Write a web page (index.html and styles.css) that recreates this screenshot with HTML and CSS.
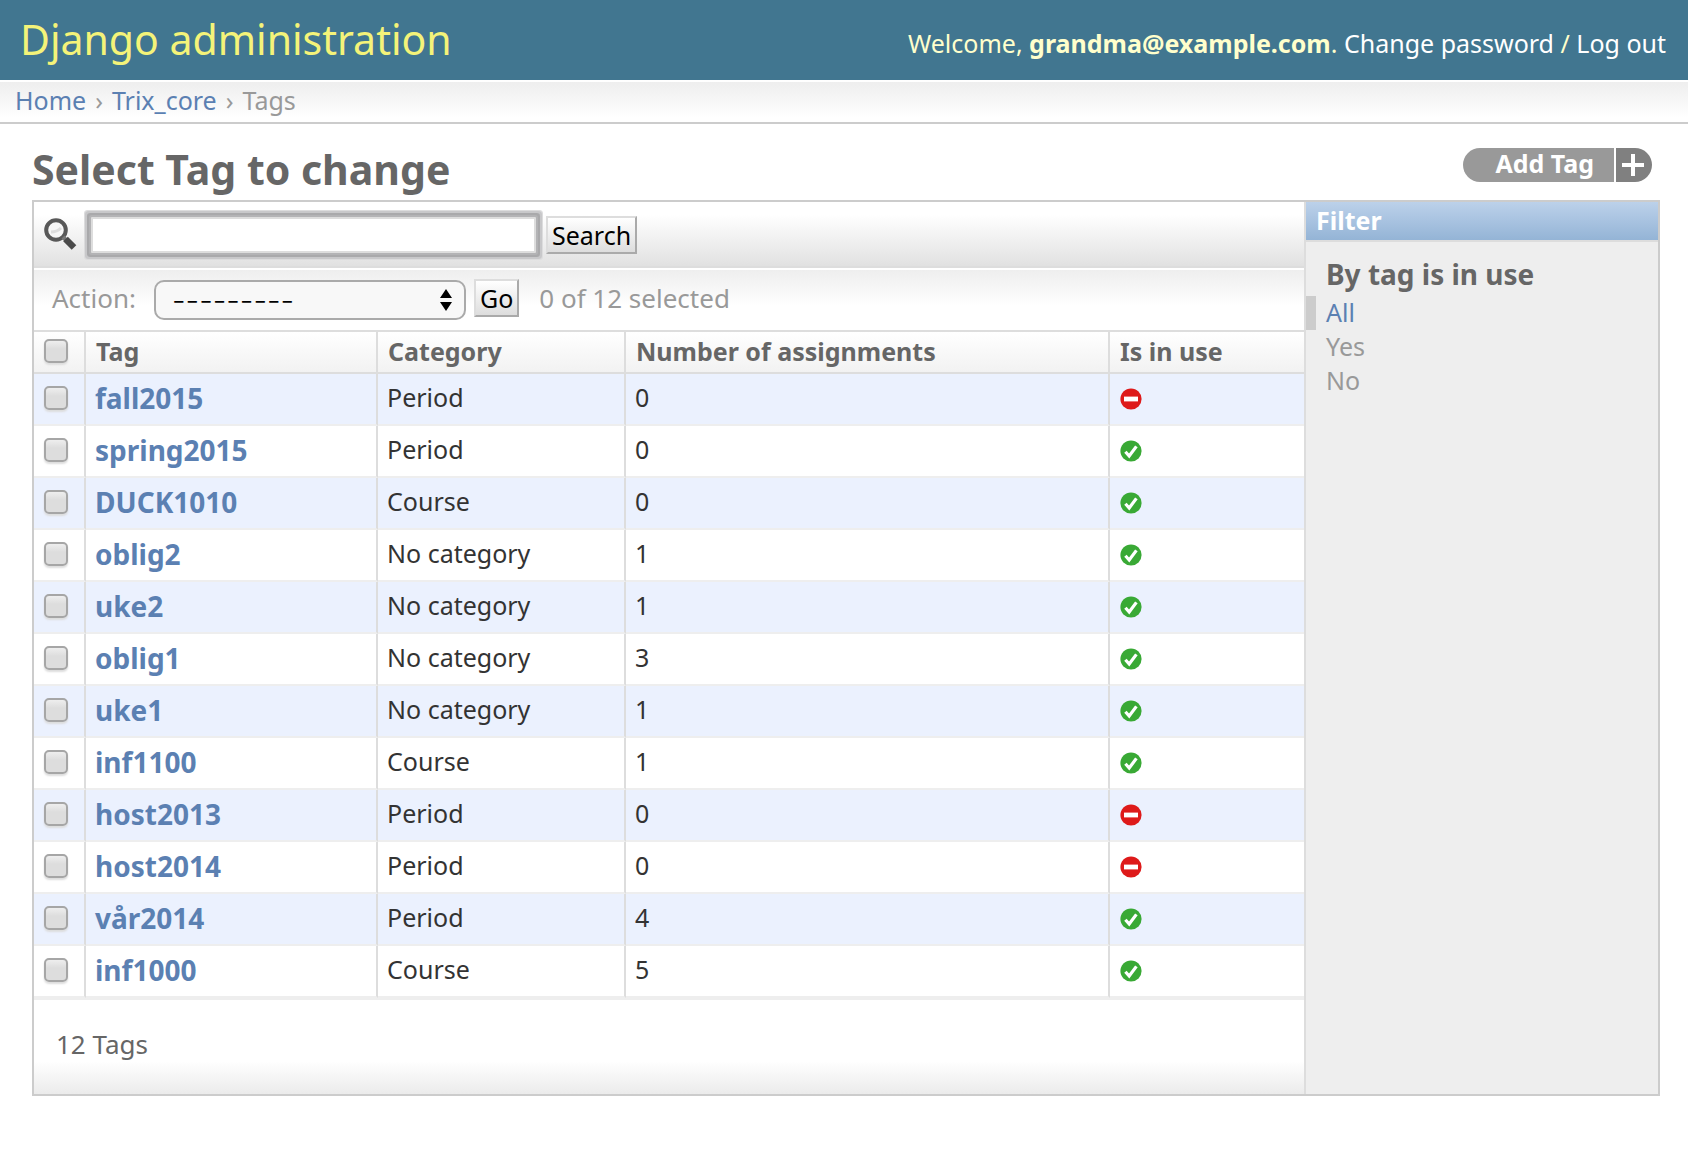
FILE: index.html
```
<!DOCTYPE html>
<html lang="en">
<head>
<meta charset="utf-8">
<title>Select Tag to change | Django site admin</title>
<link rel="stylesheet" href="styles.css">
</head>
<body>
<svg class="sprite" aria-hidden="true">
  <symbol id="icon-yes" viewBox="0 0 22 22">
    <circle cx="11" cy="11" r="10.6" fill="#39a935"/>
    <path d="M5.4 11.8 9.2 16 16.4 6.4" fill="none" stroke="#fff" stroke-width="3.2"/>
  </symbol>
  <symbol id="icon-no" viewBox="0 0 22 22">
    <circle cx="11" cy="11" r="10.6" fill="#de1a1a"/>
    <rect x="4" y="8.6" width="14" height="4.8" fill="#fff"/>
  </symbol>
</svg>

<header class="header">
  <h1 class="branding">Django administration</h1>
  <p class="user-tools">Welcome, <strong>grandma@example.com</strong>. <a href="#">Change password</a> / <a href="#">Log out</a></p>
</header>

<nav class="breadcrumbs"><a href="#">Home</a><span>›</span><a href="#">Trix_core</a><span>›</span>Tags</nav>

<main class="content">
  <div class="title-row">
    <h2 class="page-title">Select Tag to change</h2>
    <a class="add-link" href="#"><span class="add-label">Add Tag</span><span class="add-plus"><svg width="22" height="22" viewBox="0 0 22 22" aria-hidden="true"><path d="M11 0v22M0 11h22" stroke="#fff" stroke-width="4"/></svg></span></a>
  </div>

  <div class="module">
    <div class="results">
      <form class="search-bar">
        <label class="search-icon" for="searchbar"><svg width="34" height="36" viewBox="0 0 34 36" role="img" aria-label="Search"><circle cx="12" cy="13" r="9.800" fill="#f6f6f6" stroke="#585858" stroke-width="4"/><path d="M7 15q6 0 10-4" fill="none" stroke="#ddd" stroke-width="3"/><path d="M19 20l4 4" stroke="#777" stroke-width="4"/><path d="M21.500 22l8.500 8.500" stroke="#4a4a4a" stroke-width="6.500"/></svg></label>
        <input class="search-input" type="text" id="searchbar">
        <button class="button" type="button">Search</button>
      </form>

      <form class="actions">
        <label for="action">Action:</label>
        <span class="select-wrap">
          <select class="select" id="action"><option>---------</option></select>
          <svg class="select-arrows" width="12" height="22" viewBox="0 0 12 22" aria-hidden="true"><path d="M0 9 6 0l6 9zM0 13h12l-6 9z"/></svg>
        </span>
        <button class="button" type="button">Go</button>
        <span class="counter">0 of 12 selected</span>
      </form>

      <table class="list">
        <colgroup><col class="col-check"><col class="col-tag"><col class="col-category"><col><col class="col-use"></colgroup>
        <thead>
          <tr><th><input type="checkbox" aria-label="Select all"></th><th>Tag</th><th>Category</th><th>Number of assignments</th><th>Is in use</th></tr>
        </thead>
        <tbody>
          <tr><td><input type="checkbox" aria-label="fall2015"></td><th><a href="#">fall2015</a></th><td>Period</td><td>0</td><td><svg class="flag" role="img" aria-label="No"><use href="#icon-no"/></svg></td></tr>
          <tr><td><input type="checkbox" aria-label="spring2015"></td><th><a href="#">spring2015</a></th><td>Period</td><td>0</td><td><svg class="flag" role="img" aria-label="Yes"><use href="#icon-yes"/></svg></td></tr>
          <tr><td><input type="checkbox" aria-label="DUCK1010"></td><th><a href="#">DUCK1010</a></th><td>Course</td><td>0</td><td><svg class="flag" role="img" aria-label="Yes"><use href="#icon-yes"/></svg></td></tr>
          <tr><td><input type="checkbox" aria-label="oblig2"></td><th><a href="#">oblig2</a></th><td>No category</td><td>1</td><td><svg class="flag" role="img" aria-label="Yes"><use href="#icon-yes"/></svg></td></tr>
          <tr><td><input type="checkbox" aria-label="uke2"></td><th><a href="#">uke2</a></th><td>No category</td><td>1</td><td><svg class="flag" role="img" aria-label="Yes"><use href="#icon-yes"/></svg></td></tr>
          <tr><td><input type="checkbox" aria-label="oblig1"></td><th><a href="#">oblig1</a></th><td>No category</td><td>3</td><td><svg class="flag" role="img" aria-label="Yes"><use href="#icon-yes"/></svg></td></tr>
          <tr><td><input type="checkbox" aria-label="uke1"></td><th><a href="#">uke1</a></th><td>No category</td><td>1</td><td><svg class="flag" role="img" aria-label="Yes"><use href="#icon-yes"/></svg></td></tr>
          <tr><td><input type="checkbox" aria-label="inf1100"></td><th><a href="#">inf1100</a></th><td>Course</td><td>1</td><td><svg class="flag" role="img" aria-label="Yes"><use href="#icon-yes"/></svg></td></tr>
          <tr><td><input type="checkbox" aria-label="host2013"></td><th><a href="#">host2013</a></th><td>Period</td><td>0</td><td><svg class="flag" role="img" aria-label="No"><use href="#icon-no"/></svg></td></tr>
          <tr><td><input type="checkbox" aria-label="host2014"></td><th><a href="#">host2014</a></th><td>Period</td><td>0</td><td><svg class="flag" role="img" aria-label="No"><use href="#icon-no"/></svg></td></tr>
          <tr><td><input type="checkbox" aria-label="vår2014"></td><th><a href="#">vår2014</a></th><td>Period</td><td>4</td><td><svg class="flag" role="img" aria-label="Yes"><use href="#icon-yes"/></svg></td></tr>
          <tr><td><input type="checkbox" aria-label="inf1000"></td><th><a href="#">inf1000</a></th><td>Course</td><td>5</td><td><svg class="flag" role="img" aria-label="Yes"><use href="#icon-yes"/></svg></td></tr>
        </tbody>
      </table>

      <p class="paginator">12 Tags</p>
    </div>

    <aside class="filter">
      <h2 class="filter-title">Filter</h2>
      <h3 class="filter-heading">By tag is in use</h3>
      <ul class="filter-list">
        <li class="selected"><a href="#">All</a></li>
        <li><a href="#">Yes</a></li>
        <li><a href="#">No</a></li>
      </ul>
    </aside>
  </div>
</main>
</body>
</html>
```

FILE: styles.css
```
* {
  box-sizing: border-box;
}

body {
  margin: 0;
  background: #fff;
  color: #333;
  font-family: "Noto Sans", "Open Sans", sans-serif;
  font-size: 25px;
  line-height: 32px;
}

h1, h2, h3, p, ul {
  margin: 0;
  padding: 0;
}

a {
  color: #5b80b2;
  text-decoration: none;
}

.sprite {
  display: none;
}

/* Header */
.header {
  display: flex;
  align-items: center;
  justify-content: space-between;
  height: 80px;
  padding: 0 22px 0 20px;
  background: #417690;
  color: #ffc;
}

.branding {
  padding-bottom: 2px;
  color: #f4f379;
  font-size: 41px;
  font-weight: 400;
  line-height: 48px;
}

.user-tools {
  padding-top: 6px;
}

.user-tools a {
  color: #fff;
}

.breadcrumbs {
  height: 44px;
  padding: 4px 15px;
  border-top: 2px solid #fff;
  border-bottom: 2px solid #ccc;
  background: linear-gradient(#eee, #fff 36px);
  color: #999;
  line-height: 29px;
}

.breadcrumbs span {
  margin: 0 9px;
}

/* Page title and add button */
.content {
  padding: 22px 28px 54px 32px;
}

.title-row {
  display: flex;
  align-items: flex-start;
  justify-content: space-between;
  height: 54px;
  padding-right: 8px;
}

.page-title {
  color: #666;
  font-size: 41px;
  line-height: 46px;
}

.add-link {
  display: flex;
  gap: 2px;
  margin-top: 2px;
  color: #fff;
  font-weight: 700;
}

.add-label {
  padding: 0 20px 3px 32px;
  border-radius: 17px 0 0 17px;
  background: #999;
  line-height: 31px;
}

.add-plus {
  display: flex;
  align-items: center;
  justify-content: center;
  width: 36px;
  padding-right: 2px;
  border-radius: 0 17px 17px 0;
  background: #808080;
}

/* Change list */
.module {
  display: flex;
  border: 2px solid #ccc;
}

.results {
  display: flex;
  flex: 1;
  flex-direction: column;
  border-right: 2px solid #ddd;
}

.search-bar {
  display: flex;
  align-items: center;
  height: 66px;
  padding: 2px 10px 0;
  border-bottom: 2px solid #ddd;
  background: linear-gradient(#fff 20%, #e1e1e1);
}

.search-icon {
  display: flex;
  width: 47px;
}

.search-input {
  width: 445px;
  height: 36px;
  margin-right: 10px;
  padding: 0 4px;
  border: 2px solid #ddd;
  border-radius: 1px;
  outline: 0;
  background: #fff;
  box-shadow: 0 0 0 2px #b3b3b5, 0 0 0 4px #a9a9ab, 0 0 0 6px #c8c8ca, 0 0 0 7px #dcdcdd;
  font: inherit;
}

.button {
  height: 38px;
  padding: 0 4px;
  border: 2px solid;
  border-color: #ddd #aaa #aaa #ddd;
  background: linear-gradient(#fff, #ddd);
  color: #000;
  font-family: inherit;
  font-size: 25px;
  line-height: 30px;
}

.actions {
  display: flex;
  align-items: center;
  height: 64px;
  padding: 0 18px 4px;
  border-top: 2px solid #fff;
  border-bottom: 2px solid #ddd;
  background: linear-gradient(#eee, #fff 36px);
  color: #999;
  font-size: 26px;
}

.select-wrap {
  position: relative;
  margin: 4px 8px 0 18px;
}

.select {
  display: block;
  width: 312px;
  height: 40px;
  padding: 0 16px;
  border: 2px solid #aaa;
  border-radius: 10px;
  appearance: none;
  background: #f8f8f8;
  color: #000;
  font: 300 30px Inter, sans-serif;
  line-height: 36px;
}

.select-arrows {
  position: absolute;
  top: 9px;
  right: 14px;
  pointer-events: none;
}

.counter {
  margin-left: 20px;
}

.list {
  width: 100%;
  border-collapse: separate;
  border-spacing: 0;
  table-layout: fixed;
}

.col-check {
  width: 52px;
}

.col-tag {
  width: 292px;
}

.col-category {
  width: 248px;
}

.col-use {
  width: 194px;
}

.list th,
.list td {
  height: 52px;
  padding: 0 10px 2px;
  border-right: 2px solid #ddd;
  border-bottom: 2px solid #eee;
  text-align: left;
  vertical-align: middle;
}

.list tr > :last-child {
  border-right: 0;
}

.list thead th {
  height: 42px;
  border-bottom-color: #ddd;
  background: linear-gradient(#fff, #f2f2f2);
  color: #666;
}

.list tbody th {
  padding-left: 9px;
  font-size: 28px;
}

.list tbody td + th ~ td {
  padding: 0 9px 4px;
}

.list tbody tr:nth-child(odd) {
  background: #ebf1fe;
}

.list input {
  display: block;
  width: 24px;
  height: 24px;
  margin: 0;
  border: 2px solid #a6a6a6;
  border-radius: 5px;
  appearance: none;
  background: linear-gradient(#eee, #ddd 40%);
  box-shadow: 0 2px 2px #ddd;
}

.flag {
  display: block;
  width: 22px;
  height: 22px;
  margin: 4px 0 0 1px;
}

.paginator {
  height: 96px;
  padding: 28px 22px;
  border-top: 2px solid #eee;
  background: linear-gradient(#fff 65%, #ebebeb);
  color: #666;
  font-size: 26px;
}

/* Filter sidebar */
.filter {
  width: 352px;
  background: #eee;
}

.filter-title {
  height: 40px;
  padding: 2px 10px;
  border-bottom: 2px solid #ddd;
  background: linear-gradient(#bcd1ea, #94b4d6);
  color: #fff;
  font-size: 25px;
}

.filter-heading {
  padding: 16px 20px 6px;
  color: #666;
  font-size: 28px;
}

.filter-list {
  list-style: none;
}

.filter-list li {
  height: 34px;
  padding-left: 10px;
  border-left: 10px solid transparent;
  line-height: 32px;
}

.filter-list a {
  color: #999;
}

.filter-list .selected {
  border-left-color: #ccc;
}

.filter-list .selected a {
  color: #5b80b2;
}
```
